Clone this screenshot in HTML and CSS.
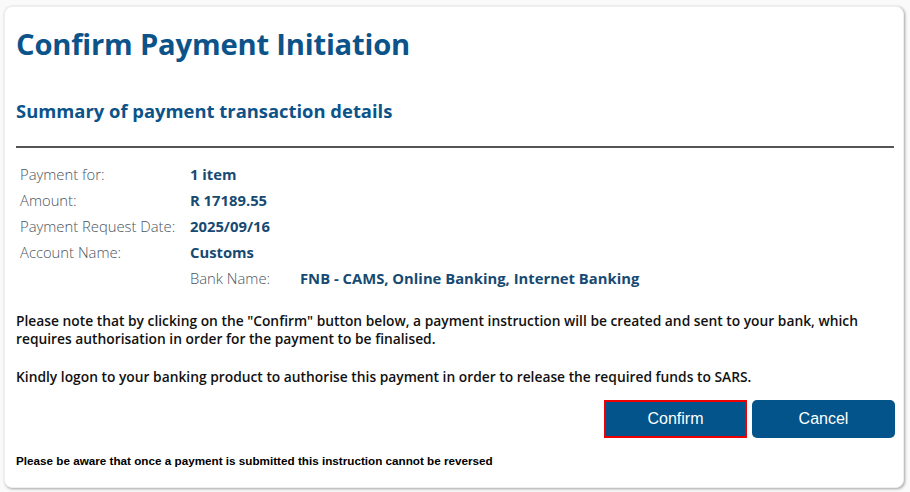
FILE: index.html
```html
<!DOCTYPE html>
<html>
<head>
<meta charset="utf-8">
<link rel="stylesheet" href="styles.css">
</head>
<body>
<div class="card">
  <h1 class="title">Confirm Payment Initiation</h1>
  <h2 class="subtitle">Summary of payment transaction details</h2>
  <hr class="rule">
  <div class="details">
    <div class="row"><span class="label">Payment for:</span><span class="value">1 item</span></div>
    <div class="row"><span class="label">Amount:</span><span class="value">R 17189.55</span></div>
    <div class="row"><span class="label">Payment Request Date:</span><span class="value">2025/09/16</span></div>
    <div class="row"><span class="label">Account Name:</span><span class="value">Customs</span></div>
    <div class="row sub"><span class="label">Bank Name:</span><span class="value">FNB - CAMS, Online Banking, Internet Banking</span></div>
  </div>
  <p class="note">Please note that by clicking on the "Confirm" button below, a payment instruction will be created and sent to your bank, which requires authorisation in order for the payment to be finalised.</p>
  <p class="note">Kindly logon to your banking product to authorise this payment in order to release the required funds to SARS.</p>
  <div class="actions">
    <button class="btn focused">Confirm</button>
    <button class="btn">Cancel</button>
  </div>
  <p class="warn">Please be aware that once a payment is submitted this instruction cannot be reversed</p>
</div>
</body>
</html>
```
FILE: styles.css
```css
html, body { margin: 0; padding: 0; background: #fafafa; }
body { padding: 6px 6px 4px 4px; font-family: "Open Sans", "Noto Sans", sans-serif; }
.card {
  background: #fff;
  border-radius: 8px;
  border: 1px solid #eee;
  box-shadow: 1px 1px 3px rgba(0,0,0,0.35);
  padding: 16px 8px 14px 11px;
  box-sizing: border-box;
  height: 482px;
}
.title {
  margin: 2px 0 0 0;
  font-size: 29.2px;
  font-weight: 700;
  color: #0b5389;
  line-height: 38px;
  letter-spacing: -0.2px;
}
.subtitle {
  margin: 35px 0 0 0;
  font-size: 18.4px;
  font-weight: 700;
  color: #0b5389;
  line-height: 26px;
}
.rule {
  margin: 22px 1px 0 0;
  border: 0;
  height: 2px;
  background: #555;
}
.details { margin-top: 13px; padding-left: 4px; }
.row { display: flex; height: 26px; align-items: center; font-size: 14.8px; }
.label { width: 170px; color: #4a5460; font-weight: 300; }
.value { color: #174a72; font-weight: 700; }
.row.sub { padding-left: 170px; }
.row.sub .label { width: 110px; }
.note {
  margin: 21px 0 0 0;
  font-size: 13.8px;
  font-weight: 600;
  line-height: 18px;
  color: #111;
}
.note + .note { margin-top: 20px; }
.actions { display: flex; justify-content: flex-end; gap: 5px; margin-top: 14px; }
.btn {
  width: 143px;
  height: 38px;
  background: #03548a;
  color: #fff;
  border: 0;
  border-radius: 5px;
  font-family: "Liberation Sans", Arial, sans-serif;
  font-size: 16px;
}
.btn.focused { outline: 2px solid #e00; outline-offset: -2px; border-radius: 0; }
.warn {
  margin: 16px 0 0 0;
  font-family: "Liberation Sans", Arial, sans-serif;
  font-weight: 700;
  font-size: 11.7px;
  color: #000;
}
```
